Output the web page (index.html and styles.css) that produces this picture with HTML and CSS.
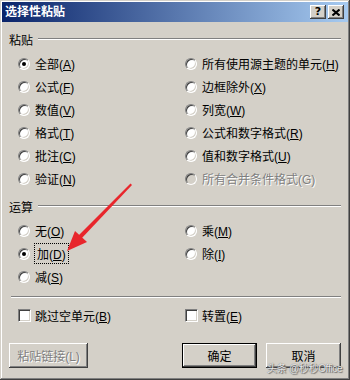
FILE: index.html
```
<!DOCTYPE html>
<html lang="zh-CN">
<head>
    <meta charset="UTF-8">
    <title>选择性粘贴</title>
    <link rel="stylesheet" href="styles.css">
</head>
<body>
    <div class="dialog">
        <div class="titlebar">
            <span class="title">选择性粘贴</span>
            <div class="title-buttons">
                <span class="tbtn help">?</span>
                <span class="tbtn">
                    <svg width="8" height="7" viewBox="0 0 8 7"><path d="M0.5 0.5 L7.5 6.5 M7.5 0.5 L0.5 6.5" stroke="#000" stroke-width="2"/></svg>
                </span>
            </div>
        </div>
        <div class="content">
            <div class="group-title"><span>粘贴</span><i class="rule"></i></div>
            <div class="options paste">
                <label class="opt"><span class="radio checked"></span><span>全部(<u>A</u>)</span></label>
                <label class="opt"><span class="radio"></span><span>所有使用源主题的单元(<u>H</u>)</span></label>
                <label class="opt"><span class="radio"></span><span>公式(<u>F</u>)</span></label>
                <label class="opt"><span class="radio"></span><span>边框除外(<u>X</u>)</span></label>
                <label class="opt"><span class="radio"></span><span>数值(<u>V</u>)</span></label>
                <label class="opt"><span class="radio"></span><span>列宽(<u>W</u>)</span></label>
                <label class="opt"><span class="radio"></span><span>格式(<u>T</u>)</span></label>
                <label class="opt"><span class="radio"></span><span>公式和数字格式(<u>R</u>)</span></label>
                <label class="opt"><span class="radio"></span><span>批注(<u>C</u>)</span></label>
                <label class="opt"><span class="radio"></span><span>值和数字格式(<u>U</u>)</span></label>
                <label class="opt"><span class="radio"></span><span>验证(<u>N</u>)</span></label>
                <label class="opt disabled"><span class="radio"></span><span>所有合并条件格式(G)</span></label>
            </div>

            <div class="group-title second"><span>运算</span><i class="rule"></i></div>
            <div class="options ops">
                <label class="opt"><span class="radio"></span><span>无(<u>O</u>)</span></label>
                <label class="opt"><span class="radio"></span><span>乘(<u>M</u>)</span></label>
                <label class="opt"><span class="radio checked"></span><span class="focus">加(<u>D</u>)</span></label>
                <label class="opt"><span class="radio"></span><span>除(<u>I</u>)</span></label>
                <label class="opt"><span class="radio"></span><span>减(<u>S</u>)</span></label>
            </div>

            <i class="separator"></i>

            <div class="options checks">
                <label class="opt"><span class="check"></span><span>跳过空单元(<u>B</u>)</span></label>
                <label class="opt"><span class="check"></span><span>转置(<u>E</u>)</span></label>
            </div>

            <div class="buttons">
                <span class="btn disabled">粘贴链接(L)</span>
                <span class="spacer"></span>
                <span class="btn default">确定</span>
                <span class="btn">取消</span>
            </div>
        </div>

        <!-- annotation on top of the screenshot -->
        <svg class="arrow" width="350" height="380" viewBox="0 0 350 380">
            <polygon points="130.5,183.5 132,185 81,239 78,236" fill="#e8262c"/>
            <polygon points="67,251 75,231 87,242" fill="#e8262c"/>
        </svg>
        <span class="watermark">头条 @秒秒Office</span>
    </div>
</body>
</html>
```

FILE: styles.css
```
body {
    margin: 0;
    padding: 0;
    background: #d4d0c8;
    font-family: "Liberation Sans", "Noto Sans CJK SC", sans-serif;
    font-size: 12px;
    color: #000;
}
.dialog {
    position: relative;
    width: 350px;
    height: 380px;
    box-sizing: border-box;
    padding: 2px;
    background: #d4d0c8;
    box-shadow: inset -1px -1px #404040, inset 1px 1px #d4d0c8, inset -2px -2px #808080, inset 2px 2px #fff;
    overflow: hidden;
}
.titlebar {
    height: 20px;
    display: flex;
    align-items: center;
    justify-content: space-between;
    padding: 0 4px 0 3px;
    background: linear-gradient(to right, #0a246a, #a6caf0);
}
.title {
    color: #fff;
    font-weight: bold;
    font-size: 12px;
    line-height: 20px;
}
.title-buttons {
    display: flex;
    gap: 2px;
}
.tbtn {
    width: 16px;
    height: 14px;
    box-sizing: border-box;
    display: flex;
    align-items: center;
    justify-content: center;
    background: #d4d0c8;
    box-shadow: inset -1px -1px #404040, inset 1px 1px #fff, inset -2px -2px #808080;
    font-family: "DejaVu Sans", sans-serif;
    font-weight: bold;
    font-size: 11px;
    line-height: 14px;
}
.content {
    padding: 9px 7px 0 7px;
}
.group-title {
    display: flex;
    align-items: center;
    height: 16px;
}
.group-title.second {
    margin-top: 8px;
}
.rule {
    flex: 1;
    height: 0;
    margin-left: 5px;
    border-top: 1px solid #808080;
    border-bottom: 1px solid #fff;
}
.options {
    display: grid;
    grid-template-columns: 167px auto;
    grid-auto-rows: 23px;
    padding-left: 9px;
    margin-top: 5px;
}
.opt {
    display: flex;
    align-items: center;
    white-space: nowrap;
}
.opt u {
    text-decoration: underline;
    text-underline-offset: 1px;
}
.radio {
    width: 12px;
    height: 12px;
    box-sizing: border-box;
    margin-right: 5px;
    border-radius: 50%;
    border: 1px solid;
    border-color: #808080 #fff #fff #808080;
    box-shadow: inset 1px 1px #404040, inset -1px -1px #d4d0c8;
    background: #fff;
    display: flex;
    align-items: center;
    justify-content: center;
}
.radio.checked::after {
    content: "";
    width: 4px;
    height: 4px;
    border-radius: 50%;
    background: #000;
}
.opt.disabled {
    color: #808080;
    text-shadow: 1px 1px #fff;
}
.opt.disabled .radio {
    background: #d4d0c8;
}
.focus {
    outline: 1px dotted #000;
    padding: 1px 2px;
}
.separator {
    display: block;
    margin: 8px 0 0 2px;
    border-top: 1px solid #808080;
    border-bottom: 1px solid #fff;
}
.options.checks {
    margin-top: 6px;
}
.check {
    width: 13px;
    height: 13px;
    box-sizing: border-box;
    margin-right: 4px;
    border: 1px solid;
    border-color: #808080 #fff #fff #808080;
    box-shadow: inset 1px 1px #404040, inset -1px -1px #d4d0c8;
    background: #fff;
}
.buttons {
    display: flex;
    gap: 9px;
    margin-top: 16px;
}
.spacer {
    flex: 1;
}
.btn {
    width: 75px;
    height: 25px;
    box-sizing: border-box;
    display: flex;
    align-items: center;
    justify-content: center;
    box-shadow: inset -1px -1px #404040, inset 1px 1px #fff, inset -2px -2px #808080, inset 2px 2px #d4d0c8;
}
.btn.disabled {
    width: 79px;
    color: #808080;
    text-shadow: 1px 1px #fff;
}
.btn.default {
    border: 1px solid #000;
}
.arrow {
    position: absolute;
    left: 0;
    top: 0;
    pointer-events: none;
}
.watermark {
    position: absolute;
    left: 267px;
    top: 360px;
    font-size: 10px;
    letter-spacing: -0.3px;
    color: rgba(255, 255, 255, 0.85);
    text-shadow: 0 0 1px #555, 1px 1px 1px #666;
    white-space: nowrap;
}
```
